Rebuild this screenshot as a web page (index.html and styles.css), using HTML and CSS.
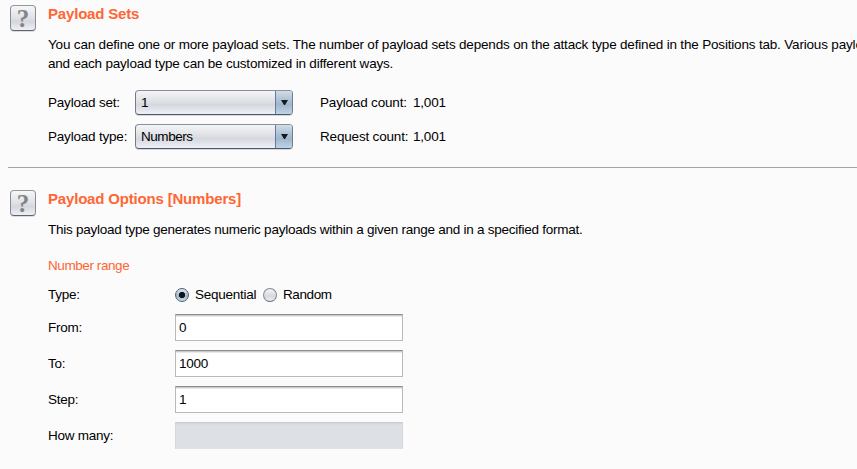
FILE: index.html
```html
<!DOCTYPE html>
<html lang="en">
<head>
<meta charset="utf-8">
<title>Payloads</title>
<link rel="stylesheet" href="styles.css">
</head>
<body>
<main class="panel">
  <section class="section sets">
    <button class="help" aria-label="Help"><span>?</span></button>
    <div class="content">
      <h2>Payload Sets</h2>
      <p class="desc intro"><span class="lead">You can define one or more payload sets. The number of payload sets depends on the attack type defined in the Positions tab. Various paylo</span><br>and each payload type can be customized in different ways.</p>
      <div class="set-grid">
        <span>Payload set:</span>
        <div class="select"><span class="value">1</span><span class="arrow"><svg width="7" height="5"><path d="M0 0H7L4 5H3Z" fill="#15181c"/></svg></span></div>
        <span class="count">Payload count:</span><span>1,001</span>
        <span>Payload type:</span>
        <div class="select"><span class="value">Numbers</span><span class="arrow"><svg width="7" height="5"><path d="M0 0H7L4 5H3Z" fill="#15181c"/></svg></span></div>
        <span class="count">Request count:</span><span>1,001</span>
      </div>
    </div>
  </section>
  <section class="section options">
    <button class="help" aria-label="Help"><span>?</span></button>
    <div class="content">
      <h2>Payload Options [Numbers]</h2>
      <p class="desc summary">This payload type generates numeric payloads within a given range and in a specified format.</p>
      <h3>Number range</h3>
      <div class="row type-row">
        <span class="label">Type:</span>
        <span class="radio checked"></span><span class="sequential">Sequential</span>
        <span class="radio"></span><span class="random">Random</span>
      </div>
      <div class="row"><span class="label">From:</span><div class="field">0</div></div>
      <div class="row"><span class="label">To:</span><div class="field">1000</div></div>
      <div class="row"><span class="label">Step:</span><div class="field">1</div></div>
      <div class="row"><span class="label">How many:</span><div class="field disabled"></div></div>
    </div>
  </section>
</main>
</body>
</html>
```
FILE: styles.css
```css
* { box-sizing: border-box; }
body {
  margin: 0;
  background: #fbfbfb;
  color: #000;
  font: 13.5px/19px "Liberation Sans", Arial, sans-serif;
  letter-spacing: -0.26px;
  overflow: hidden;
}
.panel { height: 469px; padding-left: 8px; overflow: hidden; }
.section { display: grid; grid-template-columns: 38px 1fr; padding-left: 2px; }
.sets { height: 168px; padding-top: 5px; border-bottom: 1px solid #a3a5ac; }
.options { padding-top: 22px; }
.content { min-width: 0; }
.help {
  width: 26px;
  height: 26px;
  padding: 1px 0 0;
  display: flex;
  align-items: center;
  justify-content: center;
  border: 1px solid #8a8c92;
  border-top-color: #96989c;
  border-bottom-color: #5f646e;
  border-radius: 4px;
  background: linear-gradient(#f6f7f9, #dfe1e6 50%, #d4d7de 65%, #eef0f6);
  box-shadow: 0 1px 0 #dcdde0;
  color: #858585;
  font: bold 25px/23px "Liberation Serif", serif;
}
h2 { margin: 0; font-size: 15px; line-height: 18px; letter-spacing: -0.18px; color: #ff6633; white-space: nowrap; }
.desc { margin: 12px 0 0; white-space: nowrap; }
.intro { letter-spacing: -0.205px; }
.lead { letter-spacing: -0.18px; }
.summary { letter-spacing: -0.25px; }
.set-grid {
  display: grid;
  grid-template-columns: 87px 185px 93px auto;
  grid-auto-rows: 25px;
  row-gap: 9px;
  align-items: center;
  margin-top: 17px;
  white-space: nowrap;
  letter-spacing: -0.2px;
}
.count { letter-spacing: -0.18px; }
.select {
  display: flex;
  width: 158px;
  height: 25px;
  overflow: hidden;
  border: 1px solid #777b84;
  border-top-color: #8c8f96;
  border-bottom-color: #4f5866;
  border-radius: 4px;
  background: linear-gradient(#f4f5f7, #dfe1e6 45%, #d5d8de 60%, #eef0f8);
  box-shadow: 0 1px 0 #d5d7db;
}
.value { flex: 1; padding-left: 5px; line-height: 23px; letter-spacing: -0.45px; }
.arrow {
  display: flex;
  align-items: center;
  justify-content: center;
  width: 17px;
  border-left: 1px solid #647c98;
  background: linear-gradient(#d0dce7, #a9bed2 45%, #9fb6cc 60%, #bdd3e8);
}
h3 { margin: 17px 0 0; font-size: 13.5px; font-weight: normal; line-height: 19px; letter-spacing: -0.42px; color: #ff6633; }
.row { display: flex; align-items: center; height: 27px; margin-bottom: 9px; }
.type-row { height: 19px; margin: 10px 0; }
.label { width: 127px; }
.radio {
  width: 14px;
  height: 14px;
  border: 1px solid #84878e;
  border-bottom-color: #646a75;
  border-radius: 50%;
  background: linear-gradient(#f3f4f6, #d5d8de 60%, #eceff5);
}
.radio.checked {
  border-color: #526174;
  background: radial-gradient(circle, #101419 0 2.8px, transparent 3.5px), linear-gradient(#dce6ef, #9fb5ca 60%, #c7dced);
}
.sequential { width: 74px; padding-left: 6px; }
.random { padding-left: 6px; letter-spacing: -0.4px; }
.field {
  width: 228px;
  height: 27px;
  padding-left: 3px;
  border: 1px solid #b9b9b9;
  border-top-color: #8d8d8d;
  background: linear-gradient(#cacaca 1px, #e9e9e9 1px 2px, #fff 2px);
  line-height: 25px;
}
.field.disabled {
  border-color: #d1d5db #d4d8de #dde0e5;
  border-top-color: #c7cbd2;
  background: linear-gradient(#d4d8de 1px, #dadee3 1px 2px, #dde0e5 2px);
}
```
